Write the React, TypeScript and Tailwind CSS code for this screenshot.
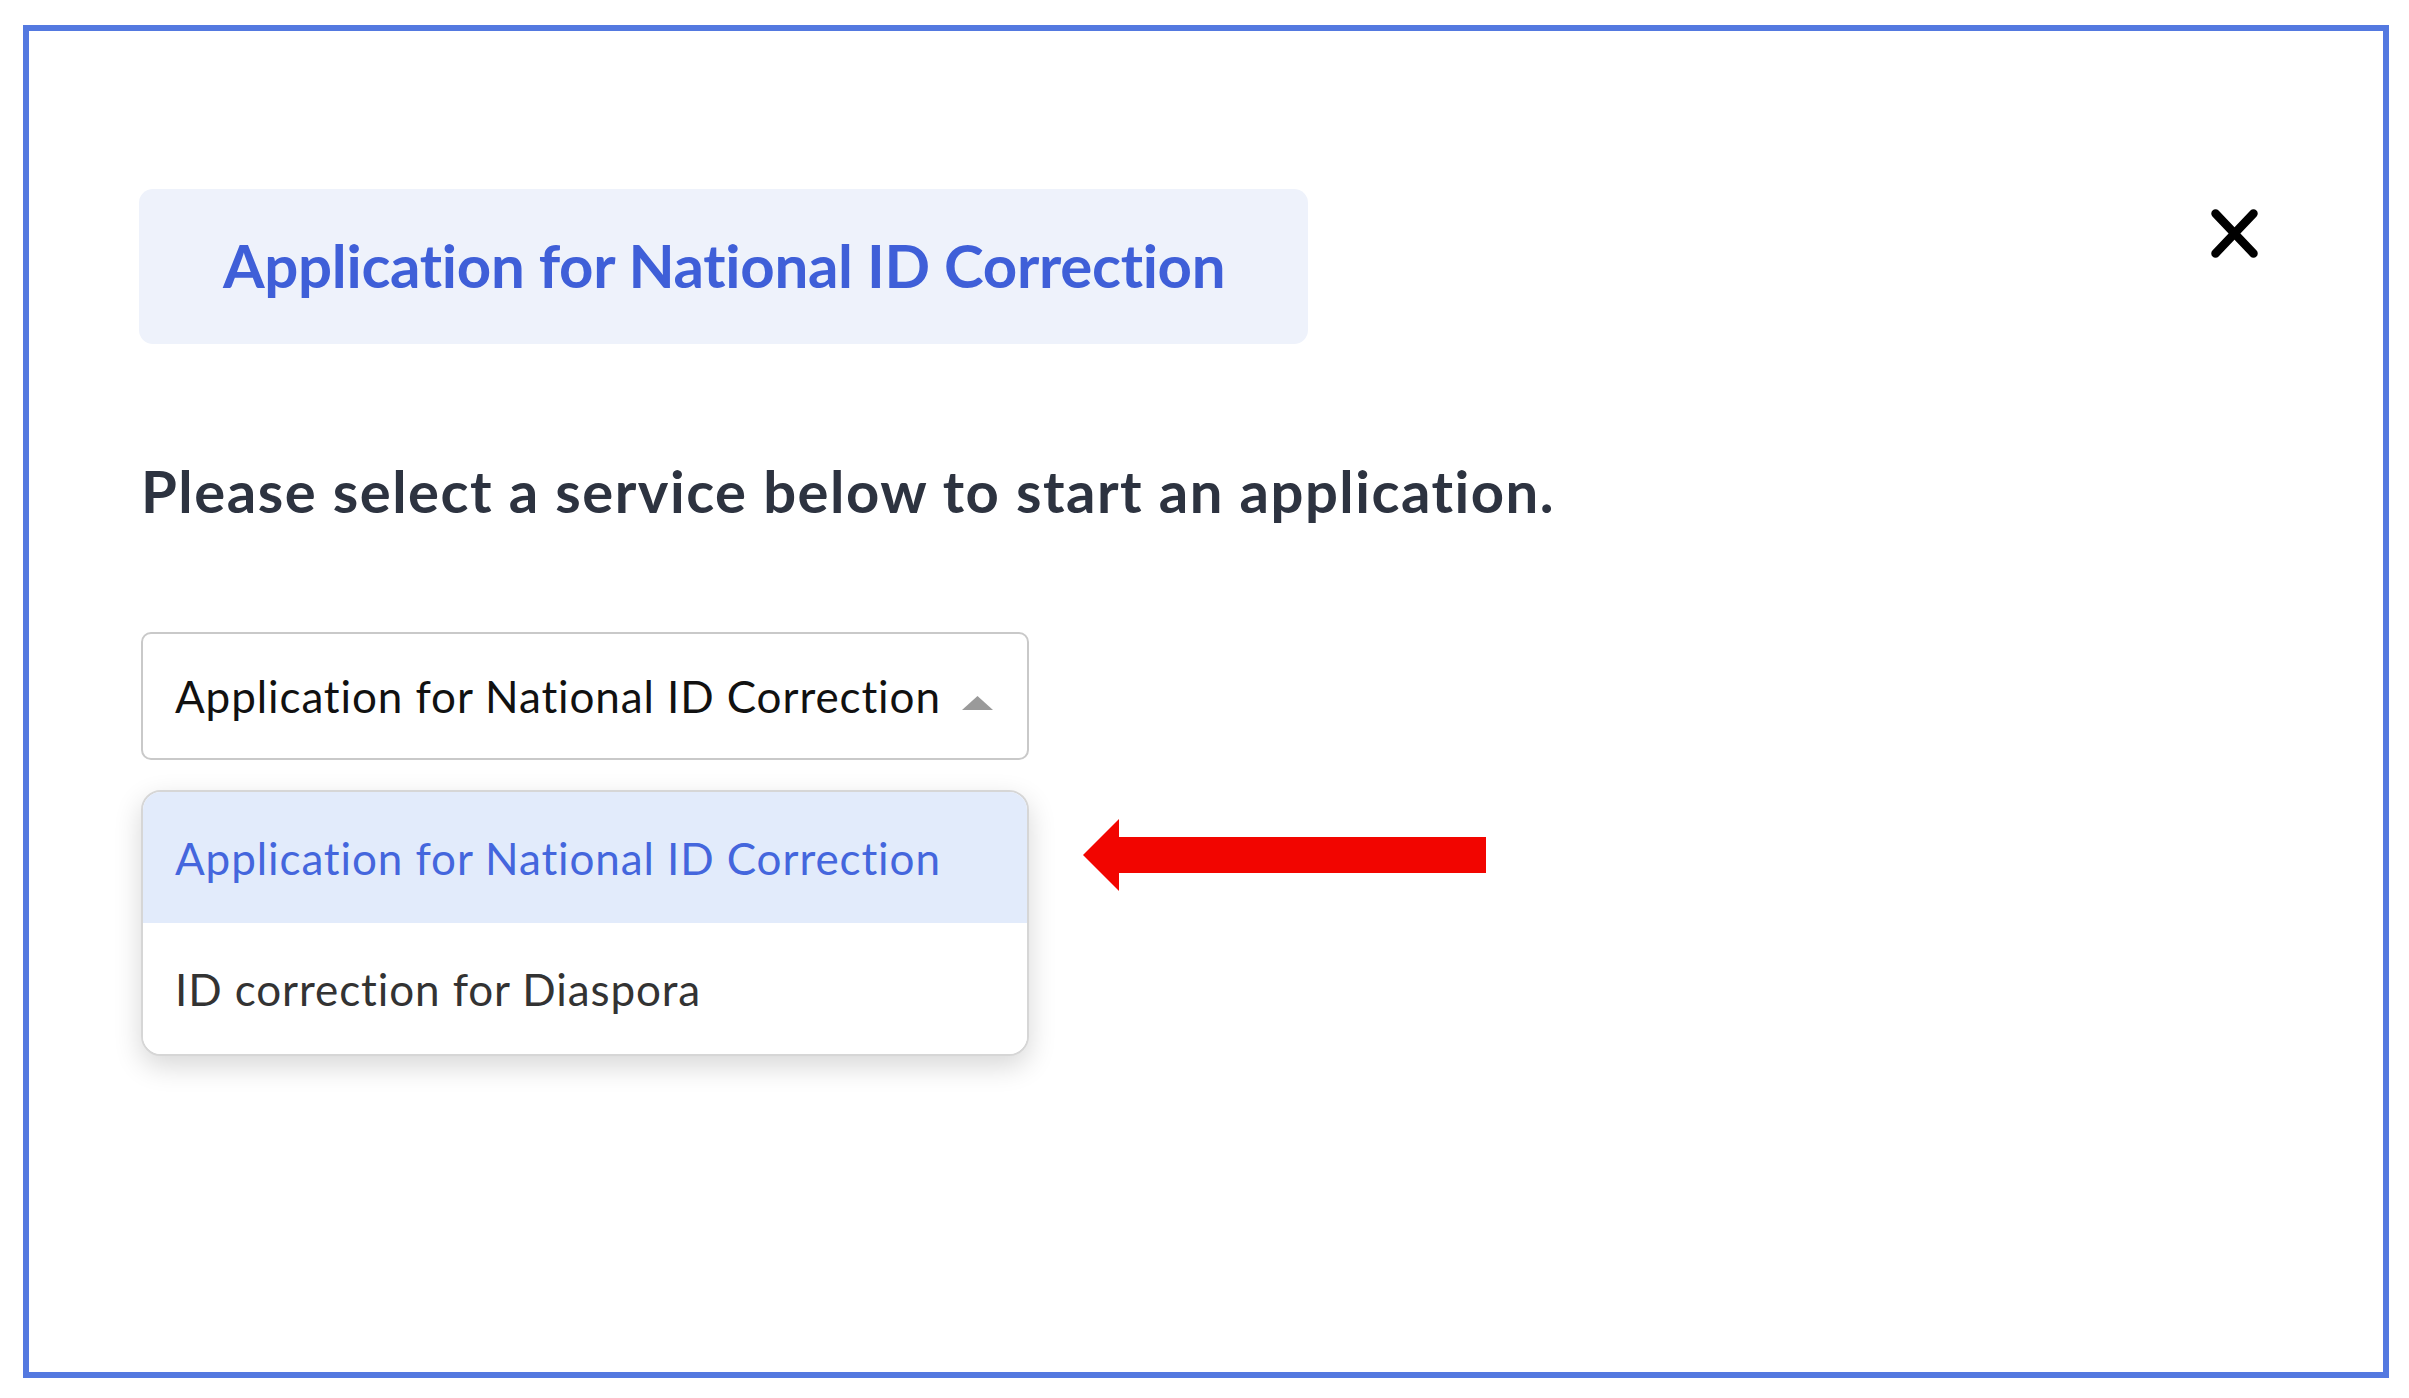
import React from "react"

const font = "font-['Lato','Noto_Sans',sans-serif] [font-variant-ligatures:none]"

function CloseIcon() {
  return (
    <svg width="47" height="49" viewBox="0 0 47 49" fill="none">
      <line x1="4.5" y1="4.5" x2="42.5" y2="44.5" stroke="#000" strokeWidth="8.5" strokeLinecap="round" />
      <line x1="42.5" y1="4.5" x2="4.5" y2="44.5" stroke="#000" strokeWidth="8.5" strokeLinecap="round" />
    </svg>
  )
}

function RedArrow() {
  return (
    <svg width="404" height="73" viewBox="0 0 404 73">
      <polygon points="0,36 36,0 36,18 403,18 403,54 36,54 36,72" fill="#f20500" />
    </svg>
  )
}

export default function App() {
  const options = ["Application for National ID Correction", "ID correction for Diaspora"]
  const selected = 0

  return (
    <div className={`w-full h-[1398px] bg-white pt-[25px] pl-[23px] pr-[20px] pb-[20px] ${font}`}>
      <div className="h-full border-[6px] border-[#5479e0] flex flex-col">
        {/* header */}
        <div className="flex items-start justify-between pl-[110px] pr-[125px] pt-[158px]">
          <div className="w-[1169px] h-[155px] rounded-[14px] bg-[#eef2fb] flex items-center pl-[84px] pb-[3px]">
            <h1 className="text-[60px] leading-none font-bold tracking-[-0.3px] text-[#3f5fd8]">
              Application for National ID Correction
            </h1>
          </div>
          <button className="mt-[20px]">
            <CloseIcon />
          </button>
        </div>

        <div className="pl-[112px] pt-[118px]">
          <p className="text-[58px] leading-none font-bold tracking-[1.5px] text-[#2d3340]">
            Please select a service below to start an application.
          </p>

          {/* select */}
          <div className="mt-[112px] w-[888px] h-[128px] border-2 border-[#c9c9c9] rounded-[10px] flex items-center justify-between pl-[32px] pr-[34px]">
            <span className="text-[44px] tracking-[0.9px] text-[#111]">{options[selected]}</span>
            <svg className="mt-[14px]" width="31" height="14" viewBox="0 0 31 14">
              <polygon points="15.5,0 31,14 0,14" fill="#9a9a9a" />
            </svg>
          </div>

          {/* menu + pointer */}
          <div className="mt-[30px] flex items-start">
            <div className="w-[888px] rounded-[20px] border-2 border-[#d6d6d6] bg-white overflow-hidden shadow-[0_10px_28px_rgba(0,0,0,0.16)]">
              {options.map((o, i) => (
                <div
                  key={o}
                  className={`h-[131px] flex items-center pl-[32px] text-[44px] tracking-[0.9px] ${
                    i === selected ? "bg-[#e2ebfb] text-[#4466dd]" : "bg-white text-[#333]"
                  }`}
                >
                  {o}
                </div>
              ))}
            </div>
            <div className="ml-[54px] mt-[29px]">
              <RedArrow />
            </div>
          </div>
        </div>
      </div>
    </div>
  )
}
